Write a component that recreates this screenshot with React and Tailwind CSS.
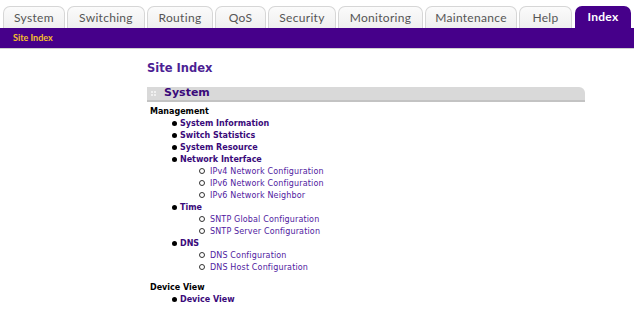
import React from 'react';

const tabs = [
  { name: 'System', w: 'w-[62px]' },
  { name: 'Switching', w: 'w-[78px]' },
  { name: 'Routing', w: 'w-[66px]' },
  { name: 'QoS', w: 'w-[51px]' },
  { name: 'Security', w: 'w-[68px]' },
  { name: 'Monitoring', w: 'w-[85px]' },
  { name: 'Maintenance', w: 'w-[92px]' },
  { name: 'Help', w: 'w-[53px]' },
];

const Bullet = () => <span className="w-[5px] h-[5px] rounded-full bg-black mr-[3px] mt-[-2px]"></span>;
const Circle = () => <span className="w-[6px] h-[6px] rounded-full border border-[#333] mr-[5px] mt-[-2px]"></span>;

const Item = ({ children }) => (
  <div className="flex items-center h-[12px] pl-[22px]">
    <Bullet />
    <a href="#" className="font-bold text-[#3a0a7a]">{children}</a>
  </div>
);

const Sub = ({ children }) => (
  <div className="flex items-center h-[12px] pl-[49px]">
    <Circle />
    <a href="#" className="text-[#4f1aa0] tracking-[0.15px]">{children}</a>
  </div>
);

const App = () => {
  return (
    <div className="w-[634px] h-[309px] bg-white overflow-hidden">
      {/* -------- TABS -------- */}
      <div className="flex items-end h-[28px] pl-[3px] gap-[2px] font-['Lato',sans-serif] text-[12px]">
        {tabs.map(t => (
          <div
            key={t.name}
            className={`${t.w} h-[22px] flex items-center justify-center rounded-t-[7px] border border-b-0 border-[#d6d6d6] bg-gradient-to-b from-[#fbfbfb] to-[#efefef] text-[#555] tracking-[0.3px]`}
          >
            {t.name}
          </div>
        ))}
        <div className="w-[56px] h-[22px] ml-[1px] flex items-center justify-center rounded-t-[7px] bg-[#46008a] text-white font-bold tracking-[0.3px]">
          Index
        </div>
      </div>
      <div className="h-[21px] bg-[#46008a] flex items-center pl-[13px] border-b border-[#cfcfcf]">
        <span className="text-[#f5c02a] text-[9px] font-['Lato',sans-serif] font-bold">Site Index</span>
      </div>

      {/* -------- CONTENT -------- */}
      <div className="ml-[147px] w-[438px] font-['DejaVu_Sans',sans-serif]">
        <div className="mt-[11px] text-[11.5px] font-bold text-[#4d1f94] leading-[16px]">Site Index</div>
        <div className="mt-[11px] h-[15px] bg-[#d9d9d9] border-b-2 border-[#c3c3c3] rounded-tr-[6px] flex items-center">
          <span className="ml-[4px] mr-[8px] grid grid-cols-2 gap-[1px]">
            <span className="w-[2px] h-[2px] bg-[#f0f0f0]"></span>
            <span className="w-[2px] h-[2px] bg-[#f0f0f0]"></span>
            <span className="w-[2px] h-[2px] bg-[#f0f0f0]"></span>
            <span className="w-[2px] h-[2px] bg-[#f0f0f0]"></span>
          </span>
          <span className="text-[11px] font-bold text-[#3a0a7a]">System</span>
        </div>

        <div className="pl-[3px] mt-[4px] text-[8px] leading-[12px]">
          <div className="font-bold text-black h-[12px]">Management</div>
          <Item>System Information</Item>
          <Item>Switch Statistics</Item>
          <Item>System Resource</Item>
          <Item>Network Interface</Item>
          <Sub>IPv4 Network Configuration</Sub>
          <Sub>IPv6 Network Configuration</Sub>
          <Sub>IPv6 Network Neighbor</Sub>
          <Item>Time</Item>
          <Sub>SNTP Global Configuration</Sub>
          <Sub>SNTP Server Configuration</Sub>
          <Item>DNS</Item>
          <Sub>DNS Configuration</Sub>
          <Sub>DNS Host Configuration</Sub>
          <div className="font-bold text-black h-[12px] mt-[8px]">Device View</div>
          <Item>Device View</Item>
        </div>
      </div>
    </div>
  );
};

export default App;
